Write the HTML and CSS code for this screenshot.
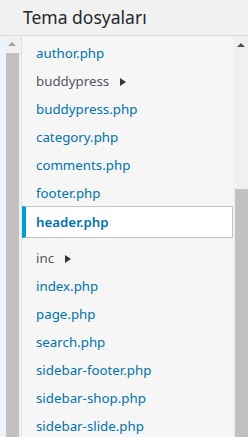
FILE: index.html
```html
<!DOCTYPE html>
<html lang="tr">
<head>
  <meta charset="UTF-8" />
  <meta name="viewport" content="width=device-width, initial-scale=1" />
  <title>Tema dosyaları</title>
  <link rel="stylesheet" href="styles.css">
</head>
<body>

  <!-- Başlık -->
  <div class="cabecera">
    <h2>Tema dosyaları</h2>
  </div>

  <div class="zona">
    <!-- barra de desplazamiento izquierda (página) -->
    <div class="franja"></div>
    <div class="barra barra-izq">
      <span class="flecha"></span>
      <div class="pulgar pulgar-izq"></div>
    </div>

    <!-- Lista de archivos -->
    <div class="panel">
      <ul class="arbol">
        <li><a href="#">author.php</a></li>
        <li class="carpeta">buddypress <span class="tri"></span></li>
        <li><a href="#">buddypress.php</a></li>
        <li><a href="#">category.php</a></li>
        <li><a href="#">comments.php</a></li>
        <li><a href="#">footer.php</a></li>
        <li class="actual"><a href="#">header.php</a></li>
        <li class="carpeta">inc <span class="tri"></span></li>
        <li><a href="#">index.php</a></li>
        <li><a href="#">page.php</a></li>
        <li><a href="#">search.php</a></li>
        <li><a href="#">sidebar-footer.php</a></li>
        <li><a href="#">sidebar-shop.php</a></li>
        <li><a href="#">sidebar-slide.php</a></li>
      </ul>
    </div>

    <!-- barra de desplazamiento derecha (lista) -->
    <div class="barra barra-der">
      <span class="flecha"></span>
      <div class="pulgar pulgar-der"></div>
    </div>
  </div>

</body>
</html>
```

FILE: styles.css
```css
/* ----------------- base ----------------- */
body {
  margin: 0;
  height: 100vh;
  overflow: hidden;
  background-color: #f1f1f1;
  font-family: 'Noto Sans', 'Open Sans', sans-serif;
  display: flex;
  flex-direction: column;
}

.cabecera {
  height: 35px;
  border-bottom: 1px solid #dcdcde;
  background-color: #f1f1f1;
  padding-left: 23px;
  flex-shrink: 0;
}
.cabecera h2 {
  margin: 0;
  font-size: 17.5px;
  font-weight: 400;
  line-height: 34px;
  color: #23282d;
}

.zona {
  flex: 1;
  display: flex;
  min-height: 0;
}

/* ----------------- barras ----------------- */
.franja {
  width: 5px;
  background-color: #ecf3fb;
}

.barra {
  display: flex;
  flex-direction: column;
  background-color: #f1f1f1;
}
.barra-izq {
  width: 14px;
  padding-right: 2px;
  border-right: 1px solid #e2e2e2;
}
.barra-der {
  width: 15px;
  background-color: #f0f0f0;
  align-items: flex-end;
}

.flecha {
  display: block;
  width: 0;
  height: 0;
  margin: 6px auto 0;
  border-left: 4px solid transparent;
  border-right: 4px solid transparent;
  border-bottom: 4px solid #a3a3a3;
}
.barra-der .flecha {
  border-bottom-color: #505050;
  margin: 7px 3px 0 0;
}

.pulgar {
  flex: 1;
  background-color: #c1c1c1;
}
.pulgar-izq {
  margin: 7px 0 0 1px;
}
.pulgar-der {
  width: 13px;
  margin-top: 142px;
}

/* ----------------- lista ----------------- */
.panel {
  flex: 1;
  background-color: #f6f6f6;
  overflow: hidden;
}

.arbol {
  list-style: none;
  margin: 0;
  padding: 3px 0 0;
}
.arbol li {
  font-size: 13.3px;
  line-height: 20px;
  padding: 4px 0 4px 14px;
  color: #50575e;
}
.arbol a {
  color: #0073aa;
  text-decoration: none;
}

.tri {
  display: inline-block;
  width: 0;
  height: 0;
  margin-left: 7px;
  border-top: 4px solid transparent;
  border-bottom: 4px solid transparent;
  border-left: 6px solid #32373c;
}

.arbol li.actual {
  background: #fff;
  border: 1px solid #c3c4c7;
  border-left: 4px solid #00a0d2;
  margin: -1px 0 6px;
  padding: 5px 0 5px 10px;
}
.actual a {
  font-weight: 600;
}
```
